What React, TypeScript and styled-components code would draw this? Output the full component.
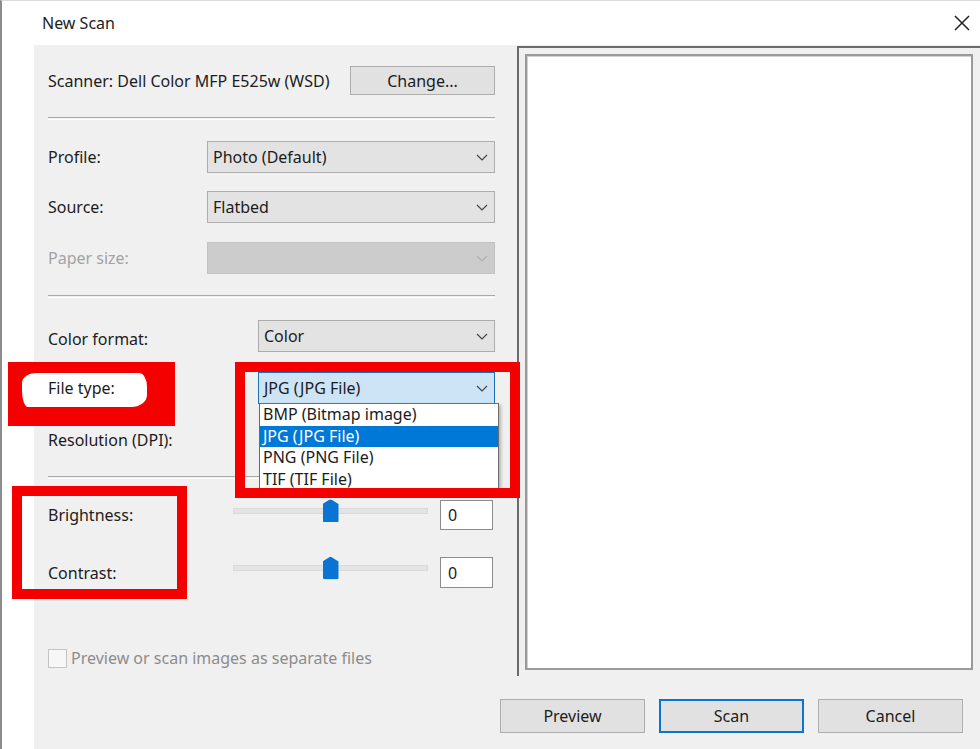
import React from "react"
import styled, { createGlobalStyle } from "styled-components"

const GlobalStyle = createGlobalStyle`
  html, body {
    margin: 0;
    padding: 0;
    background: #fff;
  }
  body {
    font-family: "Noto Sans", "Open Sans", sans-serif;
    font-size: 16px;
    color: #1c1c1c;
  }
`

const Window = styled.div`
  position: relative;
  z-index: 0;
  width: 980px;
  height: 749px;
  box-sizing: border-box;
  border-left: 2px solid #8c8c8c;
  border-top: 1px solid #dcdcdc;
  background: #fff;
  display: flex;
  flex-direction: column;
  overflow: hidden;
`

const TitleBar = styled.div`
  height: 44px;
  flex: none;
  display: flex;
  align-items: center;
  justify-content: space-between;
  padding: 0 10px 0 40px;
`

const Title = styled.div`
  font-size: 16px;
  color: #222;
`

const Body = styled.div`
  flex: 1;
  margin-left: 32px;
  background: #f0f0f0;
  display: flex;
`

const LeftPane = styled.div`
  width: 447px;
  flex: none;
  padding: 21px 5px 0 14px;
  display: flex;
  flex-direction: column;
`

const RightPane = styled.div`
  flex: 1;
  display: flex;
  flex-direction: column;
  padding-top: 1px;
`

const Row = styled.div<{ $top?: number; $h?: number }>`
  position: relative;
  display: flex;
  align-items: center;
  justify-content: space-between;
  margin-top: ${(p) => p.$top ?? 0}px;
  height: ${(p) => p.$h ?? 32}px;
`

const Label = styled.span<{ $disabled?: boolean; $raised?: boolean; $drop?: number }>`
  line-height: 22px;
  margin-top: ${(p) => p.$drop ?? 0}px;
  color: ${(p) => (p.$disabled ? "#a3a3a3" : "#1c1c1c")};
  ${(p) => (p.$raised ? "position: relative; z-index: 2;" : "")}
`

const Separator = styled.div<{ $top: number }>`
  margin-top: ${(p) => p.$top}px;
  height: 1px;
  border-top: 1px solid #a9a9a9;
  border-bottom: 1px solid #fff;
`

const PushButton = styled.div<{ $default?: boolean; $w?: number; $h?: number }>`
  width: ${(p) => p.$w ?? 145}px;
  height: ${(p) => p.$h ?? 34}px;
  box-sizing: border-box;
  display: flex;
  align-items: center;
  justify-content: center;
  background: #e1e1e1;
  border: ${(p) => (p.$default ? "2px solid #0a74cf" : "1px solid #adadad")};
  color: #1c1c1c;
`

const Select = styled.div<{ $w: number; $state?: "normal" | "focus" | "disabled" }>`
  position: relative;
  width: ${(p) => p.$w}px;
  height: 32px;
  box-sizing: border-box;
  display: flex;
  align-items: center;
  justify-content: space-between;
  padding: 0 6px 0 5px;
  background: ${(p) =>
    p.$state === "focus" ? "#cde4f7" : p.$state === "disabled" ? "#cccccc" : "#e3e3e3"};
  border: 1px solid
    ${(p) => (p.$state === "focus" ? "#1d6fb8" : p.$state === "disabled" ? "#c2c2c2" : "#adadad")};
`

const Chevron = ({ color = "#444" }: { color?: string }) => (
  <svg width="12" height="7" viewBox="0 0 12 7">
    <polyline points="1,1 6,6 11,1" fill="none" stroke={color} strokeWidth="1.2" />
  </svg>
)

const DropList = styled.div`
  position: absolute;
  top: 100%;
  left: 0;
  width: 238px;
  z-index: 3;
  background: #fff;
  border: 1px solid #6e6e6e;
  box-shadow: 2px 2px 3px rgba(0, 0, 0, 0.25);
`

const DropItem = styled.div<{ $active?: boolean }>`
  height: 21.5px;
  line-height: 21px;
  padding-left: 3px;
  background: ${(p) => (p.$active ? "#0078d7" : "transparent")};
  color: ${(p) => (p.$active ? "#fff" : "#1c1c1c")};
`

const SliderRow = styled.div<{ $top: number; $h: number }>`
  display: grid;
  grid-template-columns: 185px 207px 53px;
  align-items: center;
  margin-top: ${(p) => p.$top}px;
  height: ${(p) => p.$h}px;
`

const Track = styled.div`
  position: relative;
  height: 4px;
  margin: -9px 12px 0 0;
  background: #e4e4e4;
  border: 1px solid #dadada;
`

const Thumb = styled.div`
  position: absolute;
  left: 50%;
  top: 50%;
  width: 16px;
  height: 23px;
  transform: translate(-50%, -50%);
  background: #0a74d4;
  clip-path: polygon(50% 0, 100% 22%, 100% 100%, 0 100%, 0 22%);
  border-radius: 0 0 2px 2px;
`

const ValueBox = styled.div`
  height: 100%;
  box-sizing: border-box;
  background: #fff;
  border: 1px solid #8c8c8c;
  padding-left: 7px;
  display: flex;
  align-items: center;
`

const CheckRow = styled.div`
  margin-top: 59px;
  display: flex;
  align-items: center;
  gap: 4px;
  color: #8c8c8c;
`

const CheckBox = styled.div`
  width: 19px;
  height: 19px;
  box-sizing: border-box;
  border: 1px solid #c4c4c4;
  background: #f7f7f7;
`

const PreviewFrame = styled.div`
  margin-left: 17px;
  height: 630px;
  box-sizing: border-box;
  border-top: 2px solid #6a6a6a;
  border-left: 2px solid #6a6a6a;
  padding: 6px 7px 6px 6px;
  display: flex;
`

const PreviewArea = styled.div`
  flex: 1;
  background: #fff;
  border: 2px solid #9a9a9a;
  box-shadow: inset 1px 1px 0 #d0d0d0;
`

const ButtonBar = styled.div`
  margin-top: 23px;
  display: flex;
  gap: 14px;
`

const Marker = styled.div<{ $x: number; $y: number; $w: number; $h: number }>`
  position: absolute;
  left: ${(p) => p.$x}px;
  top: ${(p) => p.$y}px;
  width: ${(p) => p.$w}px;
  height: ${(p) => p.$h}px;
  box-sizing: border-box;
`

const RedFill = styled(Marker)`
  z-index: 1;
  background: #f50000;
`

const WhiteBlob = styled(Marker)`
  z-index: 1;
  background: #fff;
  border-radius: 14px 8px 16px 6px / 10px 14px 12px 16px;
`

const RedFrame = styled(Marker)`
  z-index: 4;
  border: 10px solid #f50000;
`

const CloseIcon = () => (
  <svg width="16" height="16" viewBox="0 0 16 16">
    <path d="M1 1 L15 15 M15 1 L1 15" stroke="#222" strokeWidth="1.5" fill="none" />
  </svg>
)

export default function App() {
  return (
    <>
      <GlobalStyle />
      <Window>
        <TitleBar>
          <Title>New Scan</Title>
          <CloseIcon />
        </TitleBar>

        <Body>
          <LeftPane>
            <Row $h={29}>
              <Label>Scanner: Dell Color MFP E525w (WSD)</Label>
              <PushButton $h={29}>Change...</PushButton>
            </Row>

            <Separator $top={22} />

            <Row $top={21}>
              <Label>Profile:</Label>
              <Select $w={288}>
                <span>Photo (Default)</span>
                <Chevron />
              </Select>
            </Row>
            <Row $top={18}>
              <Label>Source:</Label>
              <Select $w={288}>
                <span>Flatbed</span>
                <Chevron />
              </Select>
            </Row>
            <Row $top={19}>
              <Label $disabled>Paper size:</Label>
              <Select $w={288} $state="disabled">
                <span />
                <Chevron color="#b0b0b0" />
              </Select>
            </Row>

            <Separator $top={21} />

            <Row $top={22}>
              <Label $drop={6}>Color format:</Label>
              <Select $w={237}>
                <span>Color</span>
                <Chevron />
              </Select>
            </Row>
            <Row $top={20}>
              <Label $raised>File type:</Label>
              <Select $w={237} $state="focus">
                <span>JPG (JPG File)</span>
                <Chevron />
                <DropList>
                  <DropItem>BMP (Bitmap image)</DropItem>
                  <DropItem $active>JPG (JPG File)</DropItem>
                  <DropItem>PNG (PNG File)</DropItem>
                  <DropItem>TIF (TIF File)</DropItem>
                </DropList>
              </Select>
            </Row>
            <Row $top={20}>
              <Label>Resolution (DPI):</Label>
            </Row>

            <Separator $top={20} />

            <SliderRow $top={21} $h={30}>
              <Label>Brightness:</Label>
              <Track>
                <Thumb />
              </Track>
              <ValueBox>0</ValueBox>
            </SliderRow>
            <SliderRow $top={27} $h={31}>
              <Label>Contrast:</Label>
              <Track>
                <Thumb />
              </Track>
              <ValueBox>0</ValueBox>
            </SliderRow>

            <CheckRow>
              <CheckBox />
              <span>Preview or scan images as separate files</span>
            </CheckRow>
          </LeftPane>

          <RightPane>
            <PreviewFrame>
              <PreviewArea />
            </PreviewFrame>
            <ButtonBar>
              <PushButton>Preview</PushButton>
              <PushButton $default>Scan</PushButton>
              <PushButton>Cancel</PushButton>
            </ButtonBar>
          </RightPane>
        </Body>

        <RedFill $x={6} $y={361} $w={167} $h={64} />
        <WhiteBlob $x={20} $y={372} $w={125} $h={34} />
        <RedFrame $x={233} $y={361} $w={285} $h={136} />
        <RedFrame $x={10} $y={485} $w={175} $h={113} />
      </Window>
    </>
  )
}
